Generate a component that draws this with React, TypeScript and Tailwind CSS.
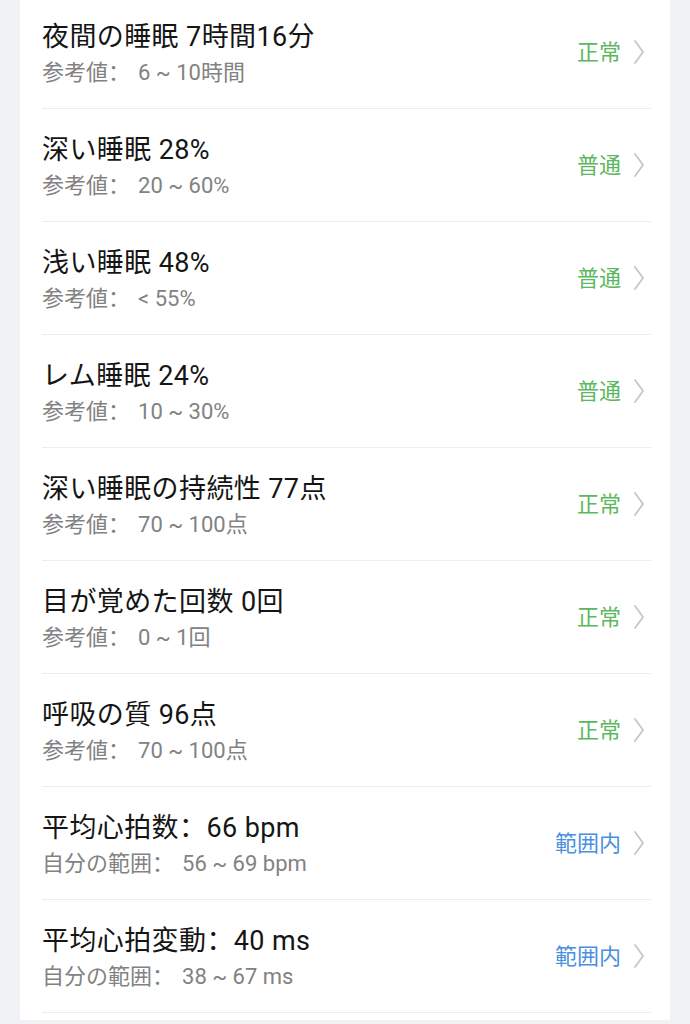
import React from 'react';

type Item = {
  title: string;
  label: string;
  value: string;
  status: string;
  tone: 'green' | 'blue';
};

const ITEMS: Item[] = [
  { title: '夜間の睡眠 7時間16分', label: '参考値：', value: '6 ~ 10時間', status: '正常', tone: 'green' },
  { title: '深い睡眠 28%', label: '参考値：', value: '20 ~ 60%', status: '普通', tone: 'green' },
  { title: '浅い睡眠 48%', label: '参考値：', value: '< 55%', status: '普通', tone: 'green' },
  { title: 'レム睡眠 24%', label: '参考値：', value: '10 ~ 30%', status: '普通', tone: 'green' },
  { title: '深い睡眠の持続性 77点', label: '参考値：', value: '70 ~ 100点', status: '正常', tone: 'green' },
  { title: '目が覚めた回数 0回', label: '参考値：', value: '0 ~ 1回', status: '正常', tone: 'green' },
  { title: '呼吸の質 96点', label: '参考値：', value: '70 ~ 100点', status: '正常', tone: 'green' },
  { title: '平均心拍数：66 bpm', label: '自分の範囲：', value: '56 ~ 69 bpm', status: '範囲内', tone: 'blue' },
  { title: '平均心拍変動：40 ms', label: '自分の範囲：', value: '38 ~ 67 ms', status: '範囲内', tone: 'blue' },
];

const Chevron = () => (
  <svg width="12" height="26" viewBox="0 0 12 26" fill="none" className="shrink-0">
    <path d="M2 2 L10 13 L2 24" stroke="#c6c6c6" strokeWidth="1.8" strokeLinecap="round" strokeLinejoin="round" />
  </svg>
);

const App: React.FC = () => {
  return (
    <div
      className="min-h-[1024px] bg-[#f1f2f5] px-[20px] overflow-hidden"
      style={{ fontFamily: 'Roboto, "Noto Sans CJK SC", sans-serif' }}
    >
      <div className="bg-white min-h-[1024px] pl-[22px] pr-[19px]">
        <ul className="-mt-[4px]">
          {ITEMS.map((item, i) => (
            <li key={i} className="flex items-center h-[113px] border-b border-[#ececec]">
              <div className="flex-1 min-w-0 pt-[4px]">
                <p className="text-[27px] leading-[34px] text-[#151515] tracking-[0.4px]">{item.title}</p>
                <p className="text-[22px] leading-[30px] text-[#828282] mt-[4px]">
                  {item.label}
                  <span className="ml-[8px]">{item.value}</span>
                </p>
              </div>
              <div className="flex items-center gap-[12px] pr-[6px]">
                <span
                  className={`text-[22px] ${item.tone === 'green' ? 'text-[#5cb85e]' : 'text-[#4a8fe0]'}`}
                >
                  {item.status}
                </span>
                <Chevron />
              </div>
            </li>
          ))}
        </ul>
      </div>
    </div>
  );
};

export default App;
